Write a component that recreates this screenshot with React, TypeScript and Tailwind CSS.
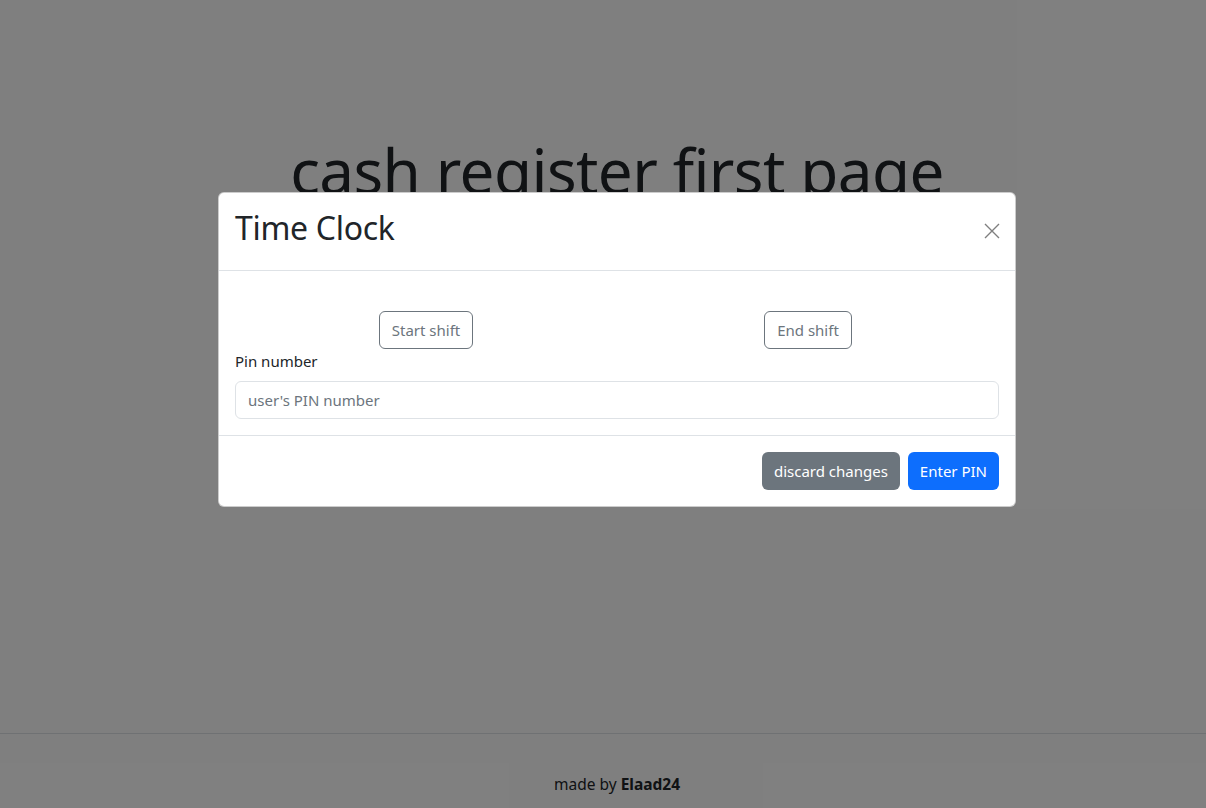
import React from "react";

function App() {
  return (
    <div className="relative w-full min-h-screen bg-white text-[#212529] font-['Noto_Sans',_sans-serif] overflow-hidden">
      <div className="w-full h-[808px] flex flex-col">
        <main className="flex-1 flex flex-col items-center pl-[28px]">
          <h1 className="mt-[133px] text-[62px] leading-[1.2] font-normal tracking-[-0.6px]">
            cash register first page
          </h1>
        </main>
        <footer className="h-[75px] border-t border-[#dee2e6] flex items-end justify-center pb-[12px] pl-[28px]">
          <p className="text-[15.5px] leading-6">
            made by <b className="font-bold">Elaad24</b>
          </p>
        </footer>
      </div>

      {/* modal backdrop + dialog */}
      <div className="absolute inset-0 bg-black/50 pl-[28px]">
        <div className="w-[798px] mx-auto mt-[192px] bg-white rounded-[6px] border border-black/20">
          <div className="flex items-start justify-between px-4 pt-4 pb-[15px] border-b border-[#dee2e6]">
            <h2 className="text-[32px] leading-[38px] font-normal mb-2 tracking-[-0.3px]">Time Clock</h2>
            <button className="w-6 h-6 mt-[10px] mr-[-5px] flex items-center justify-center text-[#7f7f7f]">
              <svg width="16" height="16" viewBox="0 0 16 16" fill="none" stroke="currentColor" strokeWidth="1.4">
                <path d="M1 1L15 15M15 1L1 15" />
              </svg>
            </button>
          </div>
          <div className="p-4">
            <div className="grid grid-cols-2 mt-6">
              <div className="flex justify-center">
                <button className="h-[38px] px-3 border border-[#6c757d] rounded-[6px] text-[#6c757d] text-[15px]">
                  Start shift
                </button>
              </div>
              <div className="flex justify-center">
                <button className="h-[38px] px-3 border border-[#6c757d] rounded-[6px] text-[#6c757d] text-[15px]">
                  End shift
                </button>
              </div>
            </div>
            <label className="block text-[15px] leading-6 mb-2">Pin number</label>
            <input
              className="block w-full h-[38px] px-3 border border-[#dee2e6] rounded-[6px] text-[15px] placeholder:text-[#6c757d] outline-none"
              placeholder="user's PIN number"
            />
          </div>
          <div className="flex justify-end gap-2 px-4 py-4 border-t border-[#dee2e6]">
            <button className="h-[38px] px-3 rounded-[6px] bg-[#6c757d] text-white text-[15px]">
              discard changes
            </button>
            <button className="h-[38px] px-3 rounded-[6px] bg-[#0d6efd] text-white text-[15px]">
              Enter PIN
            </button>
          </div>
        </div>
      </div>
    </div>
  );
}

export default App;
